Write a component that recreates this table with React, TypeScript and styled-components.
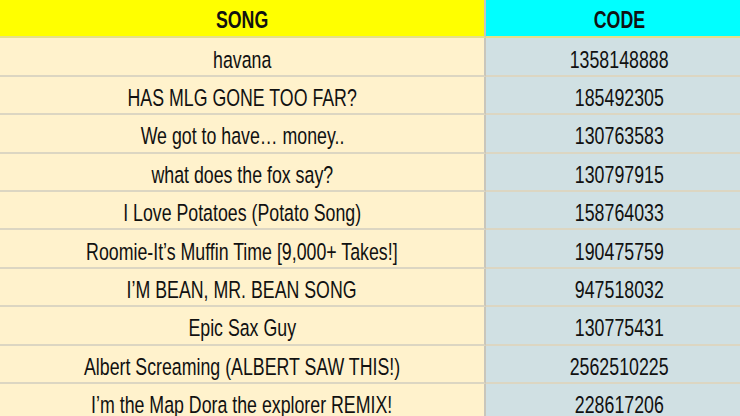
import React from "react";
import styled, { createGlobalStyle } from "styled-components";

const Global = createGlobalStyle`
  html, body { margin: 0; padding: 0; background: #fff2cc; overflow: hidden; }
  body { font-family: "Liberation Sans", Arial, sans-serif; }
`;

const Table = styled.div`
  display: grid;
  grid-template-columns: 486px 254px;
  width: 740px;
  height: 416px;
  overflow: hidden;
  grid-auto-rows: 38.4px;
`;

const Cell = styled.div<{ $bg: string; $head?: boolean; $code?: boolean }>`
  box-sizing: border-box;
  display: flex;
  align-items: center;
  justify-content: center;
  background: ${(p) => p.$bg};
  border-bottom: 2px solid ${(p) => (p.$head ? "#e6e08a" : "#dcd6c2")};
  border-right: ${(p) => (p.$code ? "none" : "2px solid #c9c6bb")};
  padding-left: ${(p) => (p.$code ? "12px" : "0")};
  padding-top: ${(p) => (p.$head ? "4px" : "6px")};
  overflow: visible;
`;

const Text = styled.span<{ $head?: boolean }>`
  display: inline-block;
  font-size: 24.5px;
  font-weight: ${(p) => (p.$head ? 700 : 400)};
  color: #111;
  white-space: nowrap;
  transform: scaleX(0.725);
  transform-origin: center;
`;

const rows: [string, string][] = [
  ["havana", "1358148888"],
  ["HAS MLG GONE TOO FAR?", "185492305"],
  ["We got to have… money..", "130763583"],
  ["what does the fox say?", "130797915"],
  ["I Love Potatoes (Potato Song)", "158764033"],
  ["Roomie-It’s Muffin Time [9,000+ Takes!]", "190475759"],
  ["I’M BEAN, MR. BEAN SONG", "947518032"],
  ["Epic Sax Guy", "130775431"],
  ["Albert Screaming (ALBERT SAW THIS!)", "2562510225"],
  ["I’m the Map Dora the explorer REMIX!", "228617206"],
];

export default function App() {
  return (
    <>
      <Global />
      <Table>
        <Cell $bg="#ffff00" $head>
          <Text $head>SONG</Text>
        </Cell>
        <Cell $bg="#00ffff" $head $code>
          <Text $head>CODE</Text>
        </Cell>
        {rows.map(([song, code]) => (
          <React.Fragment key={code}>
            <Cell $bg="#fff2cc">
              <Text>{song}</Text>
            </Cell>
            <Cell $bg="#d0e0e3" $code>
              <Text>{code}</Text>
            </Cell>
          </React.Fragment>
        ))}
      </Table>
    </>
  );
}
